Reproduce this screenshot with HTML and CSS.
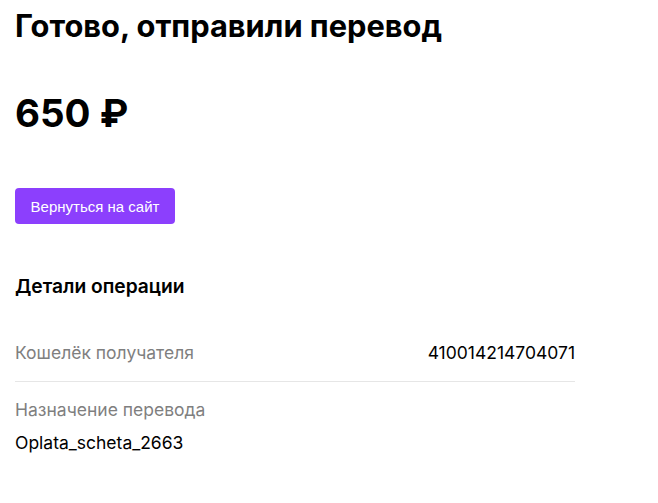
FILE: index.html
```html
<!DOCTYPE html>
<html lang="ru">
<head>
    <meta charset="UTF-8">
    <meta name="viewport" content="width=device-width, initial-scale=1.0">
    <title>Готово, отправили перевод</title>
    <link rel="stylesheet" href="styles.css">
</head>
<body>

<div class="page">
    <h1 class="title">Готово, отправили перевод</h1>
    <div class="amount">650 ₽</div>
    <button class="back-btn" type="button">Вернуться на сайт</button>

    <div class="details">
        <h2 class="details-title">Детали операции</h2>
        <div class="row row-split">
            <span class="label">Кошелёк получателя</span>
            <span class="value">410014214704071</span>
        </div>
        <div class="row">
            <div class="label">Назначение перевода</div>
            <div class="value value-below">Oplata_scheta_2663</div>
        </div>
    </div>
</div>

</body>
</html>
```

FILE: styles.css
```css
body {
    margin: 0;
    font-family: Inter, "Open Sans", sans-serif;
    color: #000;
    background-color: #fff;
}
.page {
    width: 560px;
    padding: 8px 15px;
}
.title {
    margin: 0;
    font-size: 30.8px;
    line-height: 36px;
    font-weight: 700;
}
.amount {
    margin-top: 44px;
    font-size: 38.5px;
    line-height: 50px;
    font-weight: 700;
}
.back-btn {
    display: block;
    margin-top: 50px;
    width: 160px;
    height: 36px;
    padding: 0;
    background-color: #8c3ffd;
    color: white;
    border: none;
    border-radius: 4px;
    font-family: "Liberation Sans", Arial, sans-serif;
    font-size: 15px;
    cursor: pointer;
}
.details {
    margin-top: 50px;
}
.details-title {
    margin: 0;
    font-size: 19.2px;
    line-height: 24px;
    font-weight: 600;
}
.row {
    padding: 16px 0;
    font-size: 17.5px;
    line-height: 24px;
}
.row-split {
    margin-top: 27px;
    display: flex;
    justify-content: space-between;
    border-bottom: 1px solid #e6e6e6;
}
.label {
    color: #7f7f7f;
}
.value {
    color: #000;
}
.value-below {
    margin-top: 9px;
}
```
